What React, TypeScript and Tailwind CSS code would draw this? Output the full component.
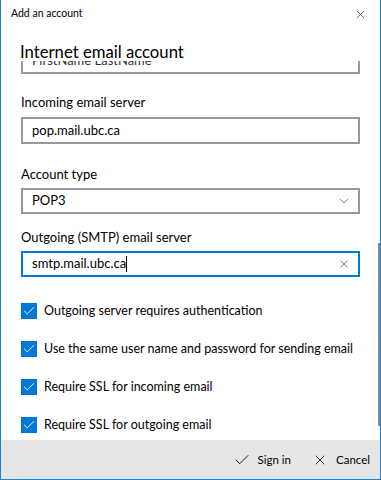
import { Check, X, ChevronDown } from 'lucide-react';

const checks = [
  'Outgoing server requires authentication',
  'Use the same user name and password for sending email',
  'Require SSL for incoming email',
  'Require SSL for outgoing email',
];

function CheckRow({ label }: { label: string }) {
  return (
    <div className="flex items-center gap-[7px] h-[16px]">
      <div className="w-[16px] h-[16px] bg-[#0078d7] flex items-center justify-center shrink-0">
        <Check size={14} strokeWidth={1.6} className="text-white" />
      </div>
      <span className="text-[12.5px] leading-[16px] text-black whitespace-nowrap">{label}</span>
    </div>
  );
}

export default function App() {
  return (
    <div
      className="w-[381px] h-[480px] bg-white border-x border-b border-[#1883d7] flex flex-col overflow-hidden"
      style={{ fontFamily: 'Lato, "Open Sans", sans-serif' }}
    >
      {/* title bar + heading */}
      <div className="h-[61px] shrink-0 flex flex-col">
        <div className="h-[28px] flex items-center justify-between pl-[10px] pr-[13px]">
          <span className="text-[10.5px] text-black">Add an account</span>
          <X size={13} strokeWidth={1.3} className="text-[#333]" />
        </div>
        <h1 className="pl-[19px] pt-[15px] text-[16.7px] leading-[18px] text-black">Internet email account</h1>
      </div>

      {/* scroll region */}
      <div className="flex-1 flex overflow-hidden">
        <div className="flex-1 min-w-0 pl-[20px] pr-[16px] flex flex-col">
          <div className="h-[13px] overflow-hidden flex flex-col justify-end">
            <div className="h-[27px] shrink-0 border-2 border-[#999] px-[9px] flex items-center text-[13px] text-[#333]">
              FirstName LastName
            </div>
          </div>

          <label className="mt-[19px] text-[13px] leading-[18px] text-black">Incoming email server</label>
          <div className="mt-[6px] h-[27px] border-2 border-[#999] px-[9px] flex items-center text-[13px] text-black">
            pop.mail.ubc.ca
          </div>

          <label className="mt-[21px] text-[13px] leading-[18px] text-black">Account type</label>
          <div className="mt-[5px] h-[26px] border-2 border-[#999] pl-[9px] pr-[6px] flex items-center justify-between text-[13px] text-black">
            <span>POP3</span>
            <ChevronDown size={16} strokeWidth={1} className="text-[#555]" />
          </div>

          <label className="mt-[14px] text-[13px] leading-[18px] text-black">Outgoing (SMTP) email server</label>
          <div className="mt-[5px] h-[26px] border-2 border-[#0078d7] pl-[9px] pr-[8px] flex items-center justify-between text-[13px] text-black">
            <span className="flex items-center">
              smtp.mail.ubc.ca
              <span className="inline-block w-px h-[16px] bg-black" />
            </span>
            <X size={12} strokeWidth={1.3} className="text-[#444]" />
          </div>

          <div className="mt-[26px] flex flex-col gap-[22px]">
            {checks.map(c => (
              <CheckRow key={c} label={c} />
            ))}
          </div>
        </div>
        <div className="w-[4px] shrink-0">
          <div className="ml-[2px] w-[2px] mt-[182px] h-[183px] bg-[#8a8a8a]" />
        </div>
      </div>

      {/* footer */}
      <div className="h-[39px] shrink-0 bg-[#e6e6e6] flex items-center justify-end pr-[10px] gap-[21px] text-[11.5px] text-black">
        <div className="flex items-center gap-[7px]">
          <Check size={18} strokeWidth={1.2} />
          <span>Sign in</span>
        </div>
        <div className="flex items-center gap-[8px]">
          <X size={16} strokeWidth={1.2} />
          <span>Cancel</span>
        </div>
      </div>
    </div>
  );
}
